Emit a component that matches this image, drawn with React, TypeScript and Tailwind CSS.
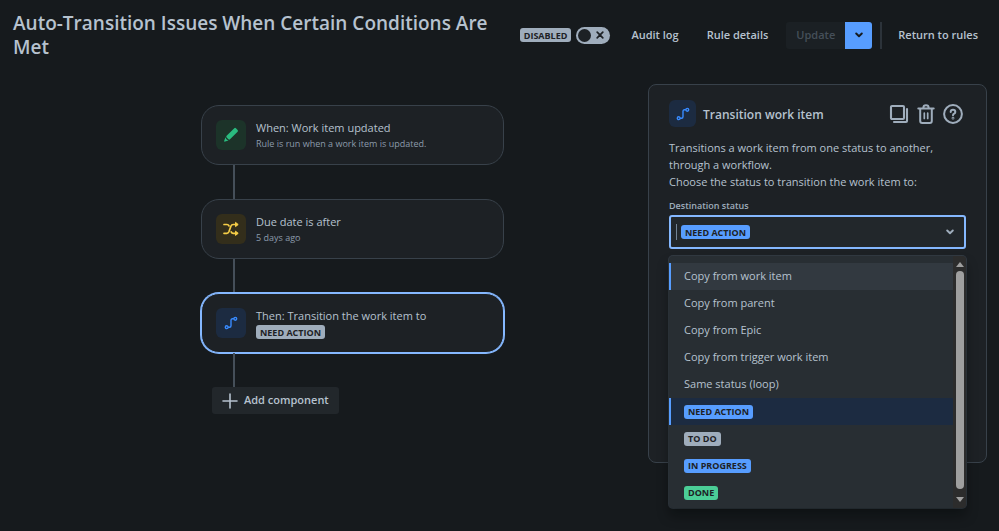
import type { ReactNode } from "react";

type Tone = "blue" | "gray" | "green";

const tones: Record<Tone, string> = {
  blue: "bg-[#579dff]",
  gray: "bg-[#9fadbc]",
  green: "bg-[#4bce97]",
};

function Lozenge({ tone, children }: { tone: Tone; children: ReactNode }) {
  return (
    <span className={`inline-flex h-[14px] w-fit items-center rounded-[3px] px-1 text-[9px] leading-none font-bold whitespace-nowrap text-[#1d2125] ${tones[tone]}`}>
      {children}
    </span>
  );
}

function PencilIcon() {
  return (
    <svg viewBox="0 0 16 16" className="size-4" fill="#2abb7f" aria-hidden="true">
      <path d="M10 2.5 11.3 1.2Q12.1.5 12.9 1.2L14.6 2.9Q15.4 3.8 14.6 4.7L7 12.3Q6.2 13 5.4 12.3L3.6 10.5Q2.8 9.6 3.6 8.8Z" />
      <path d="M2.5 10.3Q2.8 12.6 5.5 13.4L2.2 14.6Q.9 14.9 1.2 13.7Z" />
    </svg>
  );
}

function ShuffleIcon() {
  return (
    <svg viewBox="0 0 16 16" className="size-4" fill="none" stroke="#f5cd47" strokeWidth="1.7" strokeLinecap="round" strokeLinejoin="round" aria-hidden="true">
      <path d="M1 3.5h3q1.4 0 2 1.4M1 12.3h2.8q1.5 0 2.1-1.5l2.1-5.8q.6-1.5 2.2-1.5h3.5M8.2 10.9q.6 1.4 2 1.4h3.5" />
      <path d="m12.8 1.6 2.4 1.9-2.4 1.9ZM12.8 10.4l2.4 1.9-2.4 1.9Z" fill="#f5cd47" strokeWidth="1" />
    </svg>
  );
}

function TransitionIcon() {
  return (
    <svg viewBox="0 0 14 14" className="size-[14px]" fill="none" stroke="#388bff" strokeWidth="1.4" aria-hidden="true">
      <circle cx="2.7" cy="11.2" r="1.4" />
      <circle cx="11.3" cy="2.8" r="1.4" />
      <path d="M4.1 11.2h1.4Q7 11.2 7 9.7V4.3Q7 2.8 8.5 2.8h1.4" />
    </svg>
  );
}

function ChevronIcon({ className }: { className: string }) {
  return (
    <svg viewBox="0 0 8 6" className={className} fill="none" stroke="currentColor" strokeWidth="1.9" strokeLinecap="round" strokeLinejoin="round" aria-hidden="true">
      <path d="m1.2 1.5 2.8 2.7 2.8-2.7" />
    </svg>
  );
}

function CopyIcon() {
  return (
    <svg viewBox="0 0 20 20" className="size-5" fill="none" stroke="currentColor" strokeWidth="2.1" strokeLinejoin="round" strokeLinecap="round" aria-hidden="true">
      <rect x="2" y="2" width="13" height="13" rx="1" />
      <path d="M18 5v12q0 1-1 1H5" />
    </svg>
  );
}

function TrashIcon() {
  return (
    <svg viewBox="0 0 20 20" className="size-5" fill="none" stroke="currentColor" strokeWidth="2" strokeLinecap="round" strokeLinejoin="round" aria-hidden="true">
      <path d="M2.3 4.5h15.4M7.4 4.2V3.6q0-2.4 2.6-2.4t2.6 2.4v.6M4.2 4.8V17q0 2 2 2h7.6q2 0 2-2V4.8" />
      <path d="M8.3 9.2v5.2M11.7 9.2v5.2" strokeWidth="1.7" />
    </svg>
  );
}

function HelpIcon() {
  return (
    <svg viewBox="0 0 20 20" className="size-5" fill="none" stroke="currentColor" strokeWidth="2" strokeLinecap="round" strokeLinejoin="round" aria-hidden="true">
      <circle cx="10" cy="10" r="8.9" />
      <path d="M7.7 8Q7.7 5.8 10 5.8T12.3 8Q12.3 9.1 11.2 9.7 10 10.4 10 11.2" />
      <circle cx="10" cy="14.2" r=".4" />
    </svg>
  );
}

function Tile({ tint, children }: { tint: string; children: ReactNode }) {
  return <span className={`flex shrink-0 items-center justify-center rounded-md ${tint}`}>{children}</span>;
}

function Connector() {
  return <div className="ml-8 h-[34px] w-[2px] bg-[#454f59]" />;
}

function RuleCard({ icon, title, selected, children }: { icon: ReactNode; title: string; selected?: boolean; children: ReactNode }) {
  return (
    <button
      type="button"
      className={`flex h-[60px] w-full items-center gap-[10px] rounded-[18px] border bg-[#1d2125] px-[14px] text-left ${
        selected ? "border-[#85b8ff] ring-1 ring-[#85b8ff]" : "border-[#38414a]"
      }`}
    >
      {icon}
      <span className="flex flex-col pt-px">
        <span className="text-[11px] leading-[17px] text-[#b6c2cf]">{title}</span>
        <span className="flex h-4 items-center text-[9px] text-[#8c9bab]">{children}</span>
      </span>
    </button>
  );
}

const options: { label: string; tone?: Tone; focused?: boolean; selected?: boolean }[] = [
  { label: "Copy from work item", focused: true },
  { label: "Copy from parent" },
  { label: "Copy from Epic" },
  { label: "Copy from trigger work item" },
  { label: "Same status (loop)" },
  { label: "NEED ACTION", tone: "blue", selected: true },
  { label: "TO DO", tone: "gray" },
  { label: "IN PROGRESS", tone: "blue" },
  { label: "DONE", tone: "green" },
];

function StatusMenu() {
  return (
    <div className="absolute top-full right-0 left-0 z-10 mt-[7px] flex rounded-[4px] bg-[#282e33] shadow-[0_8px_12px_#0305065c,0_0_0_1px_#323a42]">
      <ul id="status-options" role="listbox" aria-label="Destination status" className="flex-1 pt-[7px] pb-[2px]">
        {options.map((o) => (
          <li
            key={o.label}
            role="option"
            aria-selected={!!o.selected}
            className={`flex h-[27px] items-center border-l-2 px-[13px] text-[11px] text-[#b6c2cf] ${
              o.focused ? "border-[#579dff] bg-[#323940]" : o.selected ? "border-[#579dff] bg-[#1c2b41]" : "border-transparent"
            }`}
          >
            {o.tone ? <Lozenge tone={o.tone}>{o.label}</Lozenge> : o.label}
          </li>
        ))}
      </ul>
      <div className="flex w-[13px] flex-col items-center justify-between rounded-r-[4px] bg-[#2c2c2c] py-[6px]" aria-hidden="true">
        <svg viewBox="0 0 8 5" className="h-[5px] w-2" fill="#9f9f9f"><path d="M4 0 8 5H0Z" /></svg>
        <div className="mt-[4px] mb-[8px] w-[8px] flex-1 rounded-full bg-[#9f9f9f]" />
        <svg viewBox="0 0 8 5" className="h-[5px] w-2" fill="#9f9f9f"><path d="M4 5 0 0h8Z" /></svg>
      </div>
    </div>
  );
}

export default function App() {
  return (
    <div className="min-h-screen bg-[#161a1d] pb-5 font-['Open_Sans','Noto_Sans',sans-serif] text-[#b6c2cf]">
      <header className="flex items-center justify-between gap-6 pt-[11px] pr-[11px] pl-[13px]">
        <h1 className="text-[19px] leading-6 font-semibold">Auto-Transition Issues When Certain Conditions Are Met</h1>
        <div className="flex shrink-0 items-center text-[11px] font-semibold whitespace-nowrap">
          <Lozenge tone="gray">DISABLED</Lozenge>
          <label className="ml-[5px] flex h-[17px] w-[34px] cursor-pointer items-center justify-between rounded-full bg-[#9fadbc] pr-[6px] pl-[2px] text-[#1d2125]">
            <input type="checkbox" aria-label="Rule enabled" className="size-[13px] appearance-none rounded-full bg-[#1d2125]" />
            <svg viewBox="0 0 8 8" className="size-2" stroke="currentColor" strokeWidth="1.7" strokeLinecap="round" aria-hidden="true">
              <path d="m1.2 1.2 5.6 5.6M6.8 1.2 1.2 6.8" />
            </svg>
          </label>
          <button type="button" className="ml-[11px] h-[27px] px-[10px]">Audit log</button>
          <button type="button" className="ml-2 h-[27px] px-[10px]">Rule details</button>
          <button type="button" disabled className="ml-2 h-[27px] rounded-l-[3px] bg-[#1b2024] px-[10px] text-[#454f59]">Update</button>
          <button type="button" aria-label="More update options" className="flex h-[27px] w-[27px] items-center justify-center rounded-r-[3px] bg-[#579dff] text-[#161a1d]">
            <ChevronIcon className="h-[6px] w-2" />
          </button>
          <span className="ml-2 h-[27px] w-[2px] bg-[#2c333a]" />
          <a href="#rules" className="ml-[6px] px-[10px]">Return to rules</a>
        </div>
      </header>

      <main className="flex items-start pt-[25px] pr-3">
        <section aria-label="Rule" className="flex flex-1 justify-center pt-[21px] pl-[57px]">
          <div className="w-[303px]">
            <RuleCard icon={<Tile tint="size-[30px] bg-[#1c3329]"><PencilIcon /></Tile>} title="When: Work item updated">
              Rule is run when a work item is updated.
            </RuleCard>
            <Connector />
            <RuleCard icon={<Tile tint="size-[30px] bg-[#332e1b]"><ShuffleIcon /></Tile>} title="Due date is after">
              5 days ago
            </RuleCard>
            <Connector />
            <RuleCard selected icon={<Tile tint="size-[30px] bg-[#1c2b41]"><TransitionIcon /></Tile>} title="Then: Transition the work item to">
              <Lozenge tone="gray">NEED ACTION</Lozenge>
            </RuleCard>
            <Connector />
            <button type="button" className="ml-[11px] flex h-[27px] items-center gap-[6px] rounded-[3px] bg-[#22272b] px-[10px] text-[11px] font-semibold">
              <svg viewBox="0 0 16 16" className="size-4" stroke="currentColor" strokeWidth="1.6" strokeLinecap="round" aria-hidden="true">
                <path d="M8 1v14M1 8h14" />
              </svg>
              Add component
            </button>
          </div>
        </section>

        <aside className="min-h-[379px] w-[339px] rounded-lg border border-[#38414a] bg-[#1d2125] px-5 pt-[15px]">
          <div className="flex items-center gap-[7px]">
            <Tile tint="size-[27px] bg-[#1c2b41]"><TransitionIcon /></Tile>
            <h2 className="flex-1 pt-[2px] text-[12px] font-semibold">Transition work item</h2>
            <div className="flex gap-[7px] pr-[3px] text-[#9fadbc]">
              <button type="button" aria-label="Duplicate"><CopyIcon /></button>
              <button type="button" aria-label="Delete"><TrashIcon /></button>
              <button type="button" aria-label="Help"><HelpIcon /></button>
            </div>
          </div>
          <p className="mt-3 text-[11px] leading-[17px]">Transitions a work item from one status to another, through a workflow.</p>
          <p className="text-[11px] leading-[17px]">Choose the status to transition the work item to:</p>
          <label htmlFor="destination" className="mt-2 block text-[9px] leading-[15px] font-semibold text-[#9fadbc]">Destination status</label>
          <div className="relative mt-[2px]">
            <div className="flex h-[34px] items-center rounded-[3px] border-2 border-[#85b8ff] bg-[#22272b] pr-[10px] pl-[5px]">
              <input id="destination" type="text" role="combobox" aria-expanded="true" aria-controls="status-options" className="h-4 w-[5px] border-l border-[#738496] bg-transparent outline-none" />
              <Lozenge tone="blue">NEED ACTION</Lozenge>
              <ChevronIcon className="ml-auto h-[6px] w-2 text-[#9fadbc]" />
            </div>
            <StatusMenu />
          </div>
        </aside>
      </main>
    </div>
  );
}
